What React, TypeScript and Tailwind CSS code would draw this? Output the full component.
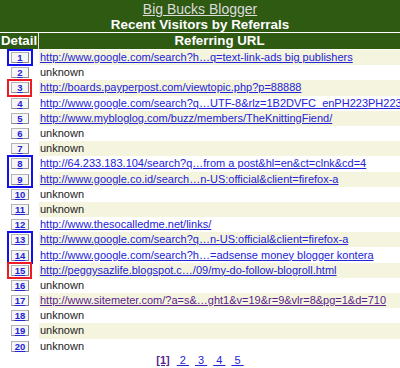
import React from "react";

type Row = { url?: string; visited?: boolean; mark?: "blue" | "red"; span?: number };

const rows: Row[] = [
  { url: "http://www.google.com/search?h…q=text-link-ads big publishers", mark: "blue", span: 1 },
  {},
  { url: "http://boards.payperpost.com/viewtopic.php?p=88888", mark: "red", span: 1 },
  { url: "http://www.google.com/search?q…UTF-8&rlz=1B2DVFC_enPH223PH223" },
  { url: "http://www.mybloglog.com/buzz/members/TheKnittingFiend/" },
  {},
  {},
  { url: "http://64.233.183.104/search?q…from a post&hl=en&ct=clnk&cd=4", mark: "blue", span: 2 },
  { url: "http://www.google.co.id/search…n-US:official&client=firefox-a" },
  {},
  {},
  { url: "http://www.thesocalledme.net/links/" },
  { url: "http://www.google.com/search?q…n-US:official&client=firefox-a", mark: "blue", span: 2 },
  { url: "http://www.google.com/search?h…=adsense money blogger kontera" },
  { url: "http://peggysazlife.blogspot.c…/09/my-do-follow-blogroll.html", mark: "red", span: 1 },
  {},
  { url: "http://www.sitemeter.com/?a=s&…ght1&v=19&r=9&vlr=8&pg=1&d=710", visited: true },
  {},
  {},
  {},
];

const ROW_H = 15.2;

function DetailButton({ n }: { n: number }) {
  return (
    <a
      href="#"
      className="flex items-center justify-center w-[18px] h-[11px] ml-[11px] border border-[#b4b4b4] border-b-[#8a8a8a] border-r-[#8a8a8a] bg-[#f6f6f6] text-[9.5px] leading-[9px] font-bold text-[#2323d8] underline"
    >
      {n}
    </a>
  );
}

export default function App() {
  return (
    <div className="w-[400px] h-[368px] overflow-hidden bg-white font-['Liberation_Sans',Arial,sans-serif]">
      <div className="h-[32px] bg-[#2e5a12] flex flex-col items-center pt-px">
        <a href="#" className="text-[14px] leading-[16px] text-[#dcdcdc] underline">
          Big Bucks Blogger
        </a>
        <div className="text-[13.4px] leading-[15px] font-bold text-white">
          Recent Visitors by Referrals
        </div>
      </div>
      <div className="flex gap-px mt-px h-[16px] bg-[#e4e4e4]">
        <div className="w-[38px] bg-[#2e5a12] text-white font-bold text-[13.3px] leading-[16px] text-center">
          Detail
        </div>
        <div className="flex-1 bg-[#2e5a12] text-white font-bold text-[13.3px] leading-[16px] text-center">
          Referring URL
        </div>
      </div>
      <div className="mt-px">
        {rows.map((r, i) => (
          <div key={i} className="flex h-[15.2px]">
            <div className="relative w-[38px] flex items-center">
              <DetailButton n={i + 1} />
              {r.mark && (
                <span
                  className={
                    r.mark === "blue"
                      ? "absolute left-[7px] w-[26px] top-[-1px] border-[2.5px] border-[#1010f0] z-10"
                      : "absolute left-[7px] w-[25px] top-[-1px] border-[2.5px] border-[#ee1b24] z-10"
                  }
                  style={{ height: (r.span ?? 1) * ROW_H + 2 }}
                />
              )}
            </div>
            <div
              className={
                "flex-1 ml-px pl-px flex items-center whitespace-nowrap overflow-hidden text-[11px] leading-[13px] " +
                (i % 2 === 0 ? "bg-[#f5f4df]" : "bg-white")
              }
            >
              {r.url ? (
                <a
                  href="#"
                  className={r.visited ? "text-[#5a1f8e] underline" : "text-[#2323d8] underline"}
                >
                  {r.url}
                </a>
              ) : (
                <span className="text-[#222]">unknown</span>
              )}
            </div>
          </div>
        ))}
      </div>
      <div className="flex justify-center items-center gap-[6px] h-[14px] text-[11px] leading-[13px]">
        <a href="#" className="font-bold text-[#5a1f8e] underline mr-px">
          [1]
        </a>
        {[2, 3, 4, 5].map((p) => (
          <a key={p} href="#" className="text-[#2323d8] underline">
            {"\u00a0" + p + "\u00a0"}
          </a>
        ))}
      </div>
    </div>
  );
}
